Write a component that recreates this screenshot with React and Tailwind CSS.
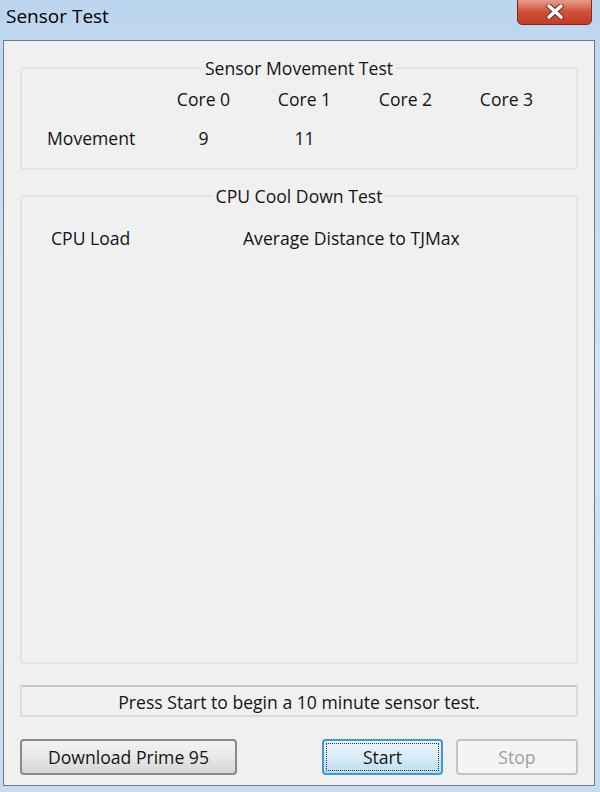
export default function App() {
  const cores = ['Core 0', 'Core 1', 'Core 2', 'Core 3']
  const movement = ['9', '11', '', '']

  return (
    <div className="w-[600px] h-[792px] flex flex-col bg-gradient-to-b from-[#bcd5ee] via-[#d4e4f5] to-[#c8dcf1] font-['Open_Sans',sans-serif] text-[#141414] text-[17.6px] leading-[22px] overflow-hidden">
      {/* title bar */}
      <div className="h-[40px] shrink-0 flex items-start justify-between pl-[6px] pr-[8px]">
        <div className="text-[19px] leading-[32px] text-black">Sensor Test</div>
        <div className="w-[75px] h-[27px] -mt-[2px] rounded-b-[5px] border border-[#7a2a22] bg-gradient-to-b from-[#e7a394] via-[#d2503a] to-[#c23c26] flex items-center justify-center shadow-[inset_0_1px_0_rgba(255,255,255,0.5)]">
          <svg width="18" height="15" viewBox="0 0 18 15">
            <path d="M3 2 L15 13 M15 2 L3 13" stroke="#6b2a22" strokeWidth="5.5" strokeLinecap="round" />
            <path d="M3 2 L15 13 M15 2 L3 13" stroke="#ffffff" strokeWidth="3.5" strokeLinecap="round" />
          </svg>
        </div>
      </div>

      {/* client area */}
      <div className="mx-[3px] mr-[5px] h-[746px] border border-[#6e7c8a] bg-[#f0f0f0] px-[16px] flex flex-col">
        {/* Sensor Movement Test */}
        <fieldset className="mt-[18px] h-[111px] border-2 border-[#dde4ea] rounded-[4px] px-0 pb-0">
          <legend className="mx-auto px-[3px] leading-[18px]">Sensor Movement Test</legend>
          <div className="grid grid-cols-[133px_repeat(4,101px)] mt-[11px] -ml-[2px]">
            <div />
            {cores.map((c) => (
              <div key={c} className="text-center">{c}</div>
            ))}
          </div>
          <div className="grid grid-cols-[133px_repeat(4,101px)] mt-[17px] -ml-[2px]">
            <div className="pl-[27px]">Movement</div>
            {movement.map((m, i) => (
              <div key={i} className="text-center">{m}</div>
            ))}
          </div>
        </fieldset>

        {/* CPU Cool Down Test */}
        <fieldset className="mt-[17px] h-[477px] border-2 border-[#dde4ea] rounded-[4px] px-0 pb-0">
          <legend className="mx-auto px-[3px] leading-[18px]">CPU Cool Down Test</legend>
          <div className="flex mt-[22px]">
            <div className="pl-[29px] w-[221px]">CPU Load</div>
            <div>Average Distance to TJMax</div>
          </div>
        </fieldset>

        {/* status */}
        <div className="mt-[21px] h-[32px] pt-[2px] border-2 border-[#dcdcdc] border-t-[#c8c8c8] rounded-[2px] flex items-center justify-center">
          Press Start to begin a 10 minute sensor test.
        </div>

        {/* buttons */}
        <div className="mt-[22px] flex items-start">
          <button className="w-[217px] h-[36px] rounded-[4px] border-2 border-[#8a8a8a] bg-gradient-to-b from-[#f4f4f4] via-[#e8e8e8] to-[#d6d6d6]">
            Download Prime 95
          </button>
          <div className="flex-1" />
          <button className="w-[121px] h-[36px] rounded-[4px] border-2 border-[#3c9bd6] bg-gradient-to-b from-[#eaf5fc] via-[#d9ecf8] to-[#bcdcef] p-[2px] mr-[13px]">
            <div className="w-full h-full border border-dotted border-[#333] flex items-center justify-center">Start</div>
          </button>
          <button className="w-[122px] h-[36px] rounded-[4px] border-2 border-[#c4c4c4] bg-[#f4f4f4] text-[#a0a0a0]">
            Stop
          </button>
        </div>
      </div>
    </div>
  )
}
